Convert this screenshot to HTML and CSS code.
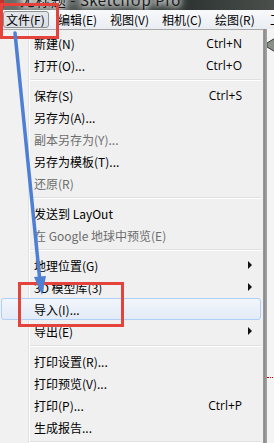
FILE: index.html
```html
<!DOCTYPE html>
<html lang="zh-CN">
<head>
  <meta charset="UTF-8" />
  <title>SketchUp 文件菜单</title>
  <link rel="stylesheet" href="styles.css">
</head>
<body>
  <div class="window">
    <div class="titlebar">
      <span class="app-icon"></span>
      <span class="title">无标题 - SketchUp Pro</span>
    </div>
    <div class="menubar">
      <div class="top-item pressed">文件(F)</div>
      <div class="top-item">编辑(E)</div>
      <div class="top-item">视图(V)</div>
      <div class="top-item w53">相机(C)</div>
      <div class="top-item w54">绘图(R)</div>
      <div class="top-item">工具(T)</div>
    </div>
    <div class="main">
      <div class="menu">
        <div class="item"><span>新建(N)</span><span class="key">Ctrl+N</span></div>
        <div class="item"><span>打开(O)...</span><span class="key">Ctrl+O</span></div>
        <div class="sep"></div>
        <div class="item"><span>保存(S)</span><span class="key">Ctrl+S</span></div>
        <div class="item"><span>另存为(A)...</span></div>
        <div class="item off"><span>副本另存为(Y)...</span></div>
        <div class="item"><span>另存为模板(T)...</span></div>
        <div class="item off"><span>还原(R)</span></div>
        <div class="sep"></div>
        <div class="item"><span>发送到 LayOut</span></div>
        <div class="item off"><span>在 Google 地球中预览(E)</span></div>
        <div class="sep"></div>
        <div class="item"><span>地理位置(G)</span><span class="sub"></span></div>
        <div class="item"><span>3D 模型库(3)</span><span class="sub"></span></div>
        <div class="item hover"><span>导入(I)...</span></div>
        <div class="item"><span>导出(E)</span><span class="sub"></span></div>
        <div class="sep"></div>
        <div class="item"><span>打印设置(R)...</span></div>
        <div class="item"><span>打印预览(V)...</span></div>
        <div class="item"><span>打印(P)...</span><span class="key">Ctrl+P</span></div>
        <div class="item"><span>生成报告...</span></div>
        <div class="sep"></div>
      </div>
      <div class="shadow"></div>
      <div class="canvas">
        <svg class="tool" width="10" height="20" viewBox="0 0 10 20">
          <polygon points="0,6 10,0 10,16 0,10" fill="#8a9088" stroke="#3c3c3c" stroke-width="1"/>
        </svg>
        <div class="dots"></div>
      </div>
    </div>

    <!-- annotations -->
    <div class="mark mark-file"></div>
    <div class="mark mark-import"></div>
    <svg class="arrow" width="60" height="300" viewBox="0 0 60 300">
      <line x1="15" y1="33" x2="40" y2="282" stroke="#4f7fd3" stroke-width="3.5" stroke-linecap="round"/>
      <polygon points="42,295 34,277 46,276" fill="#4f7fd3"/>
    </svg>
  </div>
</body>
</html>
```

FILE: styles.css
```css
* {
  margin: 0;
  padding: 0;
  box-sizing: border-box;
}

body {
  width: 274px;
  height: 443px;
  overflow: hidden;
  font-family: "Noto Sans CJK SC", "Noto Sans", sans-serif;
  font-size: 12px;
  color: #000;
  background: #f0f0f0;
}

.window {
  position: relative;
  height: 443px;
  display: flex;
  flex-direction: column;
}

.titlebar {
  height: 10px;
  display: flex;
  overflow: hidden;
  background: linear-gradient(to right, #6d716e, #3f4744 40%, #2f3633 70%, #4a4f4c);
}

.app-icon {
  width: 4px;
  height: 8px;
  background: #c9302c;
}

.title {
  margin: -9px 0 0 16px;
  font-size: 15px;
  line-height: 18px;
  color: #1b1b1b;
  white-space: nowrap;
  text-shadow: 0 0 5px #fff, 0 0 8px #fff, 0 0 10px #fff;
  letter-spacing: 0.5px;
}

.menubar {
  height: 19px;
  display: flex;
  align-items: center;
  white-space: nowrap;
  overflow: hidden;
  background: linear-gradient(#f8f9fb, #e9edf2);
}

.top-item {
  width: 52px;
  flex-shrink: 0;
  line-height: 17px;
}

.top-item.w53 {
  width: 53px;
}

.top-item.w54 {
  width: 55px;
}

.top-item.pressed {
  width: 46px;
  height: 17px;
  margin: 0 9px 0 3px;
  padding-left: 2px;
  border: 1px solid #8e8f8f;
  border-radius: 3px;
  line-height: 15px;
  background: linear-gradient(#e4e7eb, #dadfe5);
}

.main {
  flex: 1;
  display: flex;
  min-height: 0;
}

.menu {
  width: 264px;
  flex-shrink: 0;
  padding: 2px 2px 0 1px;
  border-top: 1px solid #a8a8a8;
  border-right: 1px solid #979797;
  background: linear-gradient(to right, #f1f1f1 0 28px, #e2e3e3 28px 29px, #ffffff 29px 30px, #f0f0f0 30px);
}

.item {
  height: 22px;
  display: flex;
  align-items: center;
  padding: 0 18px 0 32px;
  border: 1px solid transparent;
  border-radius: 3px;
  white-space: nowrap;
}

.item.off {
  color: #6d6d6d;
}

.item.hover {
  border-color: #aecff7;
  background: linear-gradient(#f2f6fb, #e3ebf7);
}

.key {
  margin-left: auto;
  font-family: "Open Sans", "Noto Sans", sans-serif;
}

.sub {
  margin: 0 -10px 0 auto;
  width: 0;
  height: 0;
  border-top: 4px solid transparent;
  border-bottom: 4px solid transparent;
  border-left: 4px solid #111;
}

.sep {
  height: 8px;
  margin-left: 29px;
  display: flex;
  flex-direction: column;
  justify-content: center;
}

.sep::before {
  content: "";
  height: 1px;
  background: #e0e0e0;
}

.sep::after {
  content: "";
  height: 1px;
  background: #fff;
}

.shadow {
  width: 3px;
  flex-shrink: 0;
  background: linear-gradient(to right, #8a8a8a, #a6a6a6);
}

.canvas {
  flex: 1;
  background: #f4f4f4;
  padding-top: 8px;
  display: flex;
  flex-direction: column;
}

.tool {
  display: block;
  margin-left: 0;
}

.dots {
  margin-top: 320px;
  height: 1px;
  border-top: 1px dotted #c00000;
}

.mark {
  position: absolute;
  border: 3px solid #e4433c;
}

.mark-file {
  left: 0;
  top: 3px;
  width: 59px;
  height: 36px;
}

.mark-import {
  left: 18px;
  top: 282px;
  width: 106px;
  height: 45px;
}

.arrow {
  position: absolute;
  left: 0;
  top: 0;
}
```
